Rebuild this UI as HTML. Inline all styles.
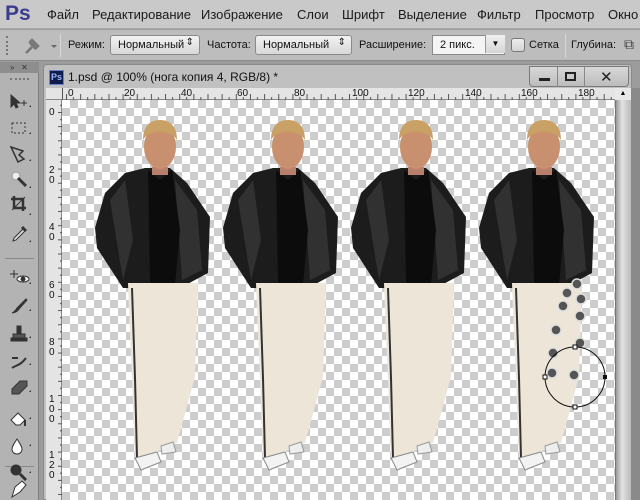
<!DOCTYPE html>
<html><head><meta charset="utf-8"><style>
*{margin:0;padding:0;box-sizing:border-box}
body{width:640px;height:500px;overflow:hidden;background:#9c9c9c;font-family:"Liberation Sans","DejaVu Sans",sans-serif;position:relative}
.a{position:absolute}
#menu{left:0;top:0;width:640px;height:29px;background:#c9c9c9;border-bottom:1px solid #a8a8a8}
#menu span{position:absolute;top:7px;font-size:13px;color:#1a1a1a}
#opt{left:0;top:30px;width:640px;height:31px;background:#bdbdbd;border-bottom:1px solid #8a8a8a}
#opt .t{position:absolute;top:9px;font-size:11px;color:#111}
.sel{position:absolute;top:5px;height:20px;border:1px solid #8a8a8a;border-radius:3px;background:linear-gradient(#f2f2f2,#d8d8d8);font-size:11px;padding:3px 7px;color:#111}
.sep{position:absolute;top:4px;width:1px;height:23px;background:#8c8c8c;border-right:1px solid #d8d8d8}
#tools{left:0;top:62px;width:39px;height:438px;background:#b3b3b3;border-right:1px solid #7e7e7e}
#doc{left:43px;top:64px;width:589px;height:436px;background:#c0c0c0;border:1px solid #8a8a8a;border-radius:4px 4px 0 0}
#canvas{left:62px;top:100px;width:553px;height:400px;background-color:#fff;background-image:linear-gradient(45deg,#cdcdcd 25%,transparent 25%,transparent 75%,#cdcdcd 75%),linear-gradient(45deg,#cdcdcd 25%,transparent 25%,transparent 75%,#cdcdcd 75%);background-size:16px 16px;background-position:0 0,8px 8px}
#rtop{left:46px;top:88px;width:569px;height:12px;background:#e4e4e4;border-bottom:1px solid #888}
#rleft{left:46px;top:100px;width:16px;height:400px;background:#e4e4e4;border-right:1px solid #888}
.rl{position:absolute;font-size:10px;color:#111;line-height:10px}
</style></head><body>
<div id="menu" class="a">
<span style="left:5px;top:2px;font-size:21px;font-weight:bold;color:#3b3d8f">Ps</span>
<span style="left:47px">Файл</span><span style="left:92px">Редактирование</span><span style="left:201px">Изображение</span><span style="left:297px">Слои</span><span style="left:342px">Шрифт</span><span style="left:398px">Выделение</span><span style="left:477px">Фильтр</span><span style="left:535px">Просмотр</span><span style="left:608px">Окно</span>
</div>
<div id="opt" class="a">
<div class="a" style="left:6px;top:6px;width:2px;height:19px;border-left:2px dotted #777"></div>
<svg class="a" style="left:22px;top:6px" width="36" height="20"><path d="M4 17l6-6M8 7l6 6M10 4l6 6-2 2-6-6z" stroke="#777" stroke-width="2.5" fill="#888"/><path d="M29 9l3 3 3-3z" fill="#666"/></svg>
<div class="sep" style="left:60px"></div>
<span class="t" style="left:68px">Режим:</span>
<div class="sel" style="left:110px;width:90px">Нормальный<span style="position:absolute;right:5px;top:1px;font-size:10px">⇕</span></div>
<span class="t" style="left:207px">Частота:</span>
<div class="sel" style="left:255px;width:97px">Нормальный<span style="position:absolute;right:5px;top:1px;font-size:10px">⇕</span></div>
<span class="t" style="left:359px">Расширение:</span>
<div class="sel" style="left:432px;width:73px;background:#f4f4f4;border-radius:0">2 пикс.<span style="position:absolute;left:52px;top:-1px;width:20px;height:18px;border-left:1px solid #999;background:linear-gradient(#f0f0f0,#d6d6d6);font-size:8px;text-align:center;line-height:18px">▼</span></div>
<div class="a" style="left:511px;top:8px;width:14px;height:14px;border:1px solid #777;border-radius:3px;background:linear-gradient(#eee,#d4d4d4)"></div>
<span class="t" style="left:529px">Сетка</span>
<div class="sep" style="left:565px"></div>
<span class="t" style="left:571px">Глубина:</span>
<span class="t" style="left:624px;top:6px;font-size:14px;color:#444">⧉</span>
</div>
<div id="tools" class="a">
<div class="a" style="left:0;top:0;width:39px;height:11px;background:#8e8e8e;font-size:8px;color:#333;padding-left:10px;line-height:11px">»&nbsp;&nbsp;&nbsp;✕</div>
<div class="a" style="left:10px;top:16px;width:19px;height:3px;border-top:2px dotted #777"></div>
<div class="a" style="left:5px;top:196px;width:29px;height:1px;background:#888"></div>
<div class="a" style="left:5px;top:404px;width:29px;height:1px;background:#888"></div>
<svg class="a" style="left:0;top:0" width="39" height="438">
<g fill="#333" stroke="#333">
<path d="M11 33v12l3-3 2 4 2-1-2-4h4z"/><path d="M21 41h6M24 38v6" stroke-width="1"/>
<rect x="12" y="61" width="13" height="10" fill="none" stroke-dasharray="2 2"/>
<path d="M11 85l12 4-4 4 5 4-6 3z" fill="none" stroke-width="1.5"/>
<circle cx="16" cy="114" r="4" fill="#eee" stroke="#999"/><path d="M18 116l8 8" stroke-width="3"/>
<path d="M14 134v12h12M11 137h12v12" fill="none" stroke-width="2.5"/><path d="M12 148l13-13" stroke-width="1"/>
<path d="M14 176l9-9 2 2-9 9-3 1z" fill="#ddd"/><path d="M22 165l4 4" stroke-width="3"/>
<path d="M10 212h8M14 208v8" stroke-width="1"/><ellipse cx="23" cy="217" rx="6" ry="3" fill="#fff"/><circle cx="23" cy="217" r="2"/>
<path d="M12 251c3-1 4-4 6-6l8-8 1 1-8 9c-1 2-4 4-7 4z"/>
<rect x="11" y="276" width="16" height="3"/><rect x="13" y="272" width="12" height="4" fill="#555"/><rect x="17" y="264" width="4" height="8"/>
<path d="M12 306c4-3 8-2 14-10" fill="none" stroke-width="2"/><path d="M12 296h6" stroke-width="2"/>
<path d="M12 327l8-8h7v5l-8 8h-7z" fill="#555"/>
<path d="M11 358l7-7 7 7-5 5h-4z" fill="#fff"/><path d="M25 358v6" stroke-width="2"/>
<path d="M17 377c-4 6-5 8-5 10 0 3 2 5 5 5s5-2 5-5c0-2-1-4-5-10z" fill="#fff"/>
<circle cx="16" cy="408" r="5"/><path d="M20 412l6 6" stroke-width="3"/>
<path d="M12 435l3-10 7-6 4 4-6 7z" fill="#fff"/>
</g>
<g fill="#333"><path d="M29 45l2-2v2zM29 72l2-2v2zM29 99l2-2v2zM29 126l2-2v2zM29 153l2-2v2zM29 180l2-2v2zM29 222l2-2v2zM29 249l2-2v2zM29 276l2-2v2zM29 303l2-2v2zM29 330l2-2v2zM29 357l2-2v2zM29 384l2-2v2zM29 411l2-2v2z"/></g>
</svg>
</div>
<div id="doc" class="a">
<div class="a" style="left:5px;top:5px;width:15px;height:15px;background:#0f1b4a;border:1px solid #6b84c8;color:#9fb6ff;font-size:9px;font-weight:bold;text-align:center;line-height:13px">Ps</div>
<span class="a" style="left:24px;top:5px;font-size:12px;color:#111">1.psd @ 100% (нога копия 4, RGB/8) *</span>
<div class="a" style="left:485px;top:1px;width:100px;height:21px;border:1px solid #7a7a7a;border-radius:0 0 4px 4px;background:linear-gradient(#d8d8d8,#bcbcbc)">
<div class="a" style="left:27px;top:0;width:1px;height:20px;background:#888"></div>
<div class="a" style="left:54px;top:0;width:1px;height:20px;background:#888"></div>
<div class="a" style="left:9px;top:11px;width:11px;height:3px;background:#222"></div>
<div class="a" style="left:35px;top:5px;width:11px;height:9px;border:2px solid #222"></div>
<span class="a" style="left:70px;top:1px;font-size:15px;font-weight:bold;color:#222">✕</span>
</div>
</div>
<div id="rtop" class="a"></div>
<div id="rleft" class="a"></div>
<svg class="a" style="left:0;top:0" width="640" height="500">
<g stroke="#555" stroke-width="1">
<path d="M62.5 88v12"/>
</g>
<g id="tk"></g>
</svg>
<div id="canvas" class="a"></div>
<div class="a" style="left:615px;top:88px;width:16px;height:412px;background:linear-gradient(90deg,#999,#e2e2e2 40%,#bbb);border-left:1px solid #777"></div>
<div class="a" style="left:615px;top:88px;width:16px;height:12px;background:#e8e8e8;font-size:7px;text-align:center;line-height:12px">▲</div>
<div class="a" style="left:631px;top:88px;width:9px;height:412px;background:#8a8a8a"></div>
<!-- ruler labels -->
<div class="rl" style="left:68px;top:89px">0</div><div class="rl" style="left:124px;top:89px">20</div><div class="rl" style="left:181px;top:89px">40</div><div class="rl" style="left:237px;top:89px">60</div><div class="rl" style="left:294px;top:89px">80</div><div class="rl" style="left:352px;top:89px">100</div><div class="rl" style="left:408px;top:89px">120</div><div class="rl" style="left:465px;top:89px">140</div><div class="rl" style="left:521px;top:89px">160</div><div class="rl" style="left:578px;top:89px">180</div>
<div class="rl" style="left:49px;top:108px">0</div>
<div class="rl" style="left:49px;top:166px;width:8px">2<br>0</div>
<div class="rl" style="left:49px;top:223px;width:8px">4<br>0</div>
<div class="rl" style="left:49px;top:281px;width:8px">6<br>0</div>
<div class="rl" style="left:49px;top:338px;width:8px">8<br>0</div>
<div class="rl" style="left:49px;top:395px;width:8px">1<br>0<br>0</div>
<div class="rl" style="left:49px;top:451px;width:8px">1<br>2<br>0</div>
<svg class="a" style="left:0;top:0" width="640" height="500">
<defs>
<pattern id="tx" x="66" y="0" width="14.15" height="500" patternUnits="userSpaceOnUse"><path d="M0.5 94v6M7.5 97v3" stroke="#555"/></pattern>
<pattern id="ty" x="0" y="112" width="640" height="14.15" patternUnits="userSpaceOnUse"><path d="M58 0.5h4M60 7.5h2" stroke="#555"/></pattern>
<g id="man">
<path d="M25 83l20-20 20-5 25 0 17 15 23 34 -2 56-28 15h-57l-26-40 -2-20z" fill="#1c1c1c"/>
<path d="M30 90l15-20 8 60-10 40zM95 70l22 30 5 60-20 10z" fill="#3a3a3a" opacity=".7"/>
<path d="M68 60l12 10 12-10 8 60-5 55h-25z" fill="#0c0c0c"/>
<path d="M48 173h70l-3 94-18 66-17 7-25 10-3-80z" fill="#ede6d8"/>
<path d="M52 178l3 90 2 80" stroke="#333" stroke-width="2" fill="none"/>
<path d="M55 348l22-6 4 10-20 8z" fill="#f3f3f3" stroke="#888"/>
<path d="M81 336l12-4 3 10-14 2z" fill="#eee" stroke="#999"/>
<rect x="72" y="57" width="16" height="8" fill="#b8806a"/>
<ellipse cx="80" cy="37" rx="16" ry="22" fill="#c8906e"/>
<path d="M63 30c0-15 8-20 17-20s17 5 17 20c-4-7-12-8-17-8s-13 1-17 8z" fill="#c9a065"/>
</g>
</defs>
<rect x="62" y="88" width="553" height="12" fill="url(#tx)"/>
<rect x="46" y="100" width="16" height="400" fill="url(#ty)"/>
<use href="#man" x="80" y="110"/>
<use href="#man" x="208" y="110"/>
<use href="#man" x="336" y="110"/>
<use href="#man" x="464" y="110"/>
<g fill="#555" stroke="#ddd" stroke-width="1.5">
<circle cx="577" cy="284" r="5"/><circle cx="567" cy="293" r="5"/><circle cx="581" cy="299" r="5"/><circle cx="563" cy="306" r="5"/><circle cx="580" cy="316" r="5"/><circle cx="556" cy="330" r="5"/><circle cx="580" cy="343" r="5"/><circle cx="553" cy="353" r="5"/><circle cx="552" cy="373" r="5"/><circle cx="574" cy="375" r="5"/>
</g>
<circle cx="575" cy="377" r="30" fill="none" stroke="#111"/>
<rect x="543" y="375" width="4" height="4" fill="#fff" stroke="#111"/><rect x="603" y="375" width="4" height="4" fill="#111"/><rect x="573" y="345" width="4" height="4" fill="#fff" stroke="#111"/><rect x="573" y="405" width="4" height="4" fill="#fff" stroke="#111"/>
</svg>
</body></html>
